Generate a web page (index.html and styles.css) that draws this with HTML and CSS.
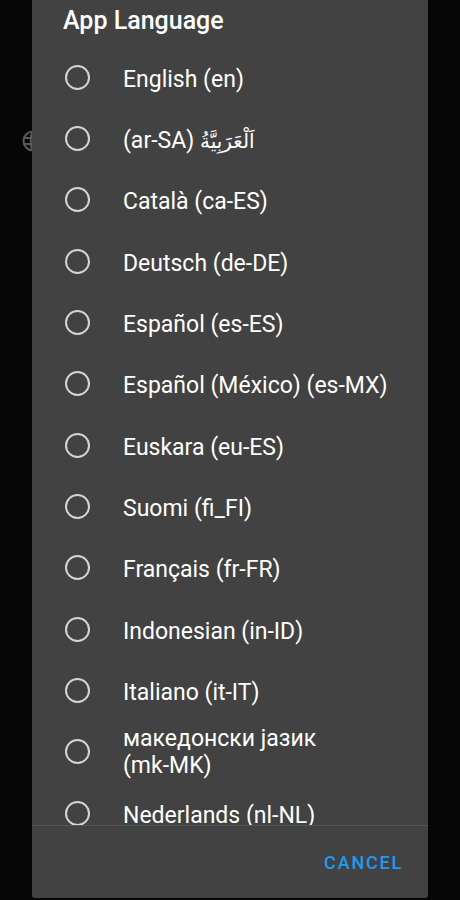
FILE: index.html
```html
<!DOCTYPE html>
<html lang="en">
<head>
<meta charset="utf-8">
<title>App Language</title>
<link rel="stylesheet" href="styles.css">
</head>
<body>
<div class="screen">
  <svg class="bg-globe" width="24" height="24" viewBox="0 0 24 24" aria-hidden="true">
    <circle cx="12" cy="12" r="9.5" fill="none" stroke="#5a5a5a" stroke-width="2"/>
    <path d="M2.5 9h19M2.5 15h19M12 2.5c-3 3-3 16 0 19M12 2.5c3 3 3 16 0 19" fill="none" stroke="#5a5a5a" stroke-width="2"/>
  </svg>
  <div class="dialog">
    <h1 class="title">App Language</h1>
    <div class="list">
      <div class="row"><span class="radio"></span><span class="label">English (en)</span></div>
      <div class="row"><span class="radio"></span><span class="label">(ar-SA) <bdi class="ar">اَلْعَرَبِيَّةُ</bdi></span></div>
      <div class="row"><span class="radio"></span><span class="label">Català (ca-ES)</span></div>
      <div class="row"><span class="radio"></span><span class="label">Deutsch (de-DE)</span></div>
      <div class="row"><span class="radio"></span><span class="label">Español (es-ES)</span></div>
      <div class="row"><span class="radio"></span><span class="label">Español (México) (es-MX)</span></div>
      <div class="row"><span class="radio"></span><span class="label">Euskara (eu-ES)</span></div>
      <div class="row"><span class="radio"></span><span class="label">Suomi (fi_FI)</span></div>
      <div class="row"><span class="radio"></span><span class="label">Français (fr-FR)</span></div>
      <div class="row"><span class="radio"></span><span class="label">Indonesian (in-ID)</span></div>
      <div class="row"><span class="radio"></span><span class="label">Italiano (it-IT)</span></div>
      <div class="row"><span class="radio"></span><span class="label multi">македонски јазик<br>(mk-MK)</span></div>
      <div class="row"><span class="radio"></span><span class="label">Nederlands (nl-NL)</span></div>
    </div>
    <div class="actions">
      <button class="btn" type="button">CANCEL</button>
    </div>
  </div>
</div>
</body>
</html>
```

FILE: styles.css
```css
html, body {
  margin: 0;
  padding: 0;
  background: #060606;
}
body {
  font-family: Roboto, "Liberation Sans", "DejaVu Sans", sans-serif;
  color: #ffffff;
}
.screen {
  position: relative;
  width: 460px;
  height: 900px;
  overflow: hidden;
}
.bg-globe {
  position: absolute;
  left: 21px;
  top: 129px;
}
.dialog {
  position: relative;
  margin-left: 32px;
  width: 396px;
  height: 898px;
  background: #424242;
  border-radius: 0 0 3px 3px;
  display: flex;
  flex-direction: column;
}
.title {
  margin: 0;
  height: 46.67px;
  box-sizing: border-box;
  padding: 5px 0 0 31px;
  font-size: 25px;
  font-weight: 500;
  line-height: 32px;
  color: #ffffff;
}
.list {
  height: 778.67px;
  overflow: hidden;
  border-bottom: 1px solid #555555;
}
.row {
  height: 61.33px;
  display: flex;
  align-items: center;
}
.radio {
  flex: none;
  width: 21px;
  height: 21px;
  margin-left: 33px;
  border: 2.6px solid #d6d6d6;
  border-radius: 50%;
}
.label {
  margin-left: 33px;
  padding-top: 4px;
  font-size: 23px;
  line-height: 27px;
  color: #ffffff;
}
.label.multi {
  padding-top: 1px;
}
.ar {
  font-family: "DejaVu Sans", sans-serif;
  font-size: 20px;
}
.actions {
  flex: 1;
  display: flex;
  justify-content: flex-end;
  align-items: center;
  padding-right: 25px;
  padding-bottom: 0;
}
.btn {
  background: none;
  border: none;
  padding: 0;
  font-family: Roboto, "Liberation Sans", sans-serif;
  font-size: 18px;
  font-weight: 500;
  letter-spacing: 1.8px;
  color: #1e9bf0;
}
```
